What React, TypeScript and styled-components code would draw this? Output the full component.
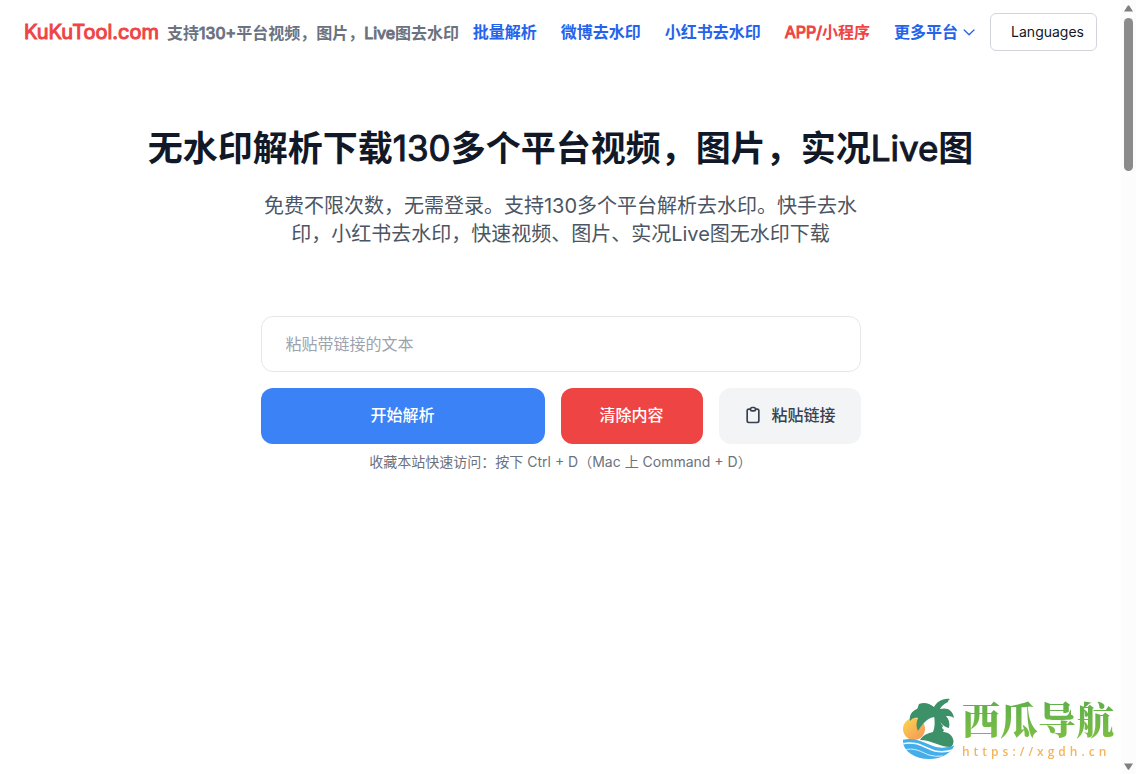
import React, { useState } from "react";
import styled, { createGlobalStyle } from "styled-components";

const GlobalStyle = createGlobalStyle`
  *, *::before, *::after { box-sizing: border-box; }
  html, body, #root { height: 100%; }
  body {
    margin: 0;
    background: #fff;
    color: #111827;
    font-family: Inter, "Noto Sans CJK SC", sans-serif;
    font-size: 16px;
    line-height: 24px;
  }
  button, input { font: inherit; }
`;

const Shell = styled.div`
  display: flex;
  height: 100%;
  min-height: 100vh;
`;

const Page = styled.div`
  flex: 1;
  min-width: 0;
  display: flex;
  flex-direction: column;
`;

const Header = styled.header`
  display: flex;
  align-items: center;
  justify-content: space-between;
  height: 64px;
  padding: 0 24px;
  white-space: nowrap;
`;

const Brand = styled.a`
  display: flex;
  align-items: center;
  gap: 8px;
  text-decoration: none;
`;

/* Latin runs are the regular weight thickened by an outline. */
const Latin = styled.span`
  font-weight: 400;
  -webkit-text-stroke: 1px currentColor;
`;

const BrandName = styled(Latin)`
  color: #ef4444;
  font-size: 20px;
  line-height: 28px;
`;

const BrandNote = styled.span`
  color: #6b7280;
  font-weight: 600;
  padding-top: 2px;
`;

const Nav = styled.nav`
  display: flex;
  align-items: center;
  gap: 24px;
`;

const NavLink = styled.a<{ $accent?: boolean }>`
  color: ${(p) => (p.$accent ? "#ef4444" : "#2563eb")};
  font-weight: 600;
  text-decoration: none;
`;

const MoreButton = styled.button`
  display: flex;
  align-items: center;
  gap: 4px;
  padding: 0;
  border: 0;
  background: none;
  color: #2563eb;
  font-weight: 600;
  cursor: pointer;
`;

const LanguageButton = styled.button`
  height: 38px;
  padding: 0 12px 0 20px;
  border: 1px solid #d1d5db;
  border-radius: 6px;
  background: #fff;
  color: #111827;
  font-size: 14px;
  line-height: 20px;
  cursor: pointer;
`;

const HeaderEnd = styled.div`
  display: flex;
  align-items: center;
  gap: 14px;
`;

const Main = styled.main`
  flex: 1;
  display: flex;
  flex-direction: column;
  align-items: center;
  padding: 64px 24px 0;
`;

const Title = styled.h1`
  margin: 0;
  font-size: 35px;
  line-height: 40px;
  font-weight: 600;
  text-align: center;
`;

const Lead = styled.p`
  max-width: 600px;
  margin: 24px 0 0;
  color: #4b5563;
  font-size: 20px;
  line-height: 28px;
  text-align: center;
`;

const Form = styled.form`
  display: grid;
  grid-template-columns: 2fr 1fr 1fr;
  gap: 16px;
  width: 100%;
  max-width: 600px;
  margin-top: 68px;
`;

const LinkInput = styled.input`
  grid-column: 1 / -1;
  min-width: 0;
  height: 56px;
  padding: 0 24px;
  border: 1px solid #e5e7eb;
  border-radius: 12px;
  background: #fff;
  outline: none;
  &::placeholder { color: #9ca3af; opacity: 1; }
`;

const tones = {
  primary: { bg: "#3b82f6", fg: "#fff" },
  danger: { bg: "#ef4444", fg: "#fff" },
  plain: { bg: "#f3f4f6", fg: "#374151" },
};

const ActionButton = styled.button<{ $tone: keyof typeof tones }>`
  display: flex;
  align-items: center;
  justify-content: center;
  gap: 8px;
  height: 56px;
  padding: 0 0 2px;
  border: 0;
  border-radius: 12px;
  background: ${(p) => tones[p.$tone].bg};
  color: ${(p) => tones[p.$tone].fg};
  font-weight: 500;
  cursor: pointer;
`;

const Hint = styled.p`
  margin: 8px 0 0;
  color: #6b7280;
  font-size: 14px;
  line-height: 20px;
`;

const ScrollTrack = styled.div`
  flex: none;
  width: 15px;
  display: flex;
  flex-direction: column;
  align-items: center;
  padding: 5px 0 4px;
  background: #fcfcfc;
`;

const ScrollThumb = styled.div`
  width: 9px;
  height: 20%;
  margin: 6px 0 auto;
  border-radius: 5px;
  background: #8b8b8b;
`;

const Watermark = styled.a`
  position: fixed;
  right: 22px;
  bottom: 14px;
  display: flex;
  align-items: center;
  gap: 6px;
  text-decoration: none;
`;

const WatermarkText = styled.span`
  display: flex;
  flex-direction: column;
  gap: 4px;
`;

const WatermarkName = styled.span`
  color: transparent;
  background: linear-gradient(#5cad4b, #7cbf45);
  background-clip: text;
  font-family: "Noto Serif CJK SC", "Noto Sans CJK SC", serif;
  font-size: 38px;
  line-height: 44px;
  font-weight: 900;
`;

const WatermarkUrl = styled.span`
  color: #f6b45a;
  font-family: "Open Sans", sans-serif;
  font-size: 12px;
  line-height: 16px;
  font-weight: 600;
  letter-spacing: 4px;
`;

const Chevron = () => (
  <svg width="14" height="14" viewBox="0 0 14 14" fill="none" stroke="currentColor" strokeWidth="1.3" strokeLinecap="round" strokeLinejoin="round" aria-hidden="true">
    <path d="M2.2 5l4.9 4.8L12 5" />
  </svg>
);

const Clipboard = () => (
  <svg width="20" height="20" viewBox="0 0 24 24" fill="none" stroke="currentColor" strokeWidth="2" strokeLinecap="round" strokeLinejoin="round" aria-hidden="true">
    <path d="M9 5H7a2 2 0 0 0-2 2v12a2 2 0 0 0 2 2h10a2 2 0 0 0 2-2V7a2 2 0 0 0-2-2h-2M9 5a2 2 0 0 0 2 2h2a2 2 0 0 0 2-2M9 5a2 2 0 0 1 2-2h2a2 2 0 0 1 2 2" />
  </svg>
);

const Arrow = ({ down }: { down?: boolean }) => (
  <svg width="9" height="7" viewBox="0 0 9 7" fill="#7f7f7f" aria-hidden="true">
    <path d={down ? "M0 0.5h9L5.3 6.3q-.8 1-1.6 0z" : "M0 6.5h9L5.3.7q-.8-1-1.6 0z"} />
  </svg>
);

const IslandLogo = () => (
  <svg width="54" height="62" viewBox="0 0 54 62" aria-hidden="true">
    <defs>
      <linearGradient id="sun" x1="0" y1="0" x2="1" y2="1">
        <stop offset="0" stopColor="#fbd84b" />
        <stop offset="1" stopColor="#f4925a" />
      </linearGradient>
      <clipPath id="sea">
        <path d="M1 38h52v6a26 18 0 0 1-52 0z" />
      </clipPath>
    </defs>
    <circle cx="12" cy="32" r="11" fill="url(#sun)" />
    <path d="M18 43C21 38 26 36 31 35c2-5 2-10 1-17l6-1c0 6 0 9 3 12l-1 2 2 2-1 2c6 0 10 4 10.500 9 0 3-1 5-3 6C38 50 29 43 18 43z" fill="#3c9168" />
    <path d="M33 20C28 20 22 24 16 34c-2-4-2-8 0-13-3-1-6 0-8 3-1-6 2-10 7-12 1-1 1-3 2-5 5-2 10-1 15 3C35 5 40 1 48 2q-2 1-2 3-6 3-8 7c7-2 13 1 14 9-3-2-5-2-8-2 3 3 4 7 3 12-5-1-9-5-11-10z" fill="#3c9168" />
    <g clipPath="url(#sea)">
      <path d="M0 43C14 39 24 47 34 50q9 2 20-2v14H0z" fill="#43aeea" />
      <path d="M0 47c14-4 23 4 33 7q10 2 21-2" fill="none" stroke="#fff" strokeWidth="1.500" />
      <path d="M2 53c11-3 17 2 25 5q6 2 14 1" fill="none" stroke="#fff" strokeWidth="0.800" />
    </g>
  </svg>
);

export default function App() {
  const [text, setText] = useState("");
  return (
    <>
      <GlobalStyle />
      <Shell>
        <Page>
          <Header>
            <Brand href="#">
              <BrandName>KuKuTool.com</BrandName>
              <BrandNote>支持<Latin>130+</Latin>平台视频，图片，<Latin>Live</Latin>图去水印</BrandNote>
            </Brand>
            <HeaderEnd>
              <Nav>
                <NavLink href="#">批量解析</NavLink>
                <NavLink href="#">微博去水印</NavLink>
                <NavLink href="#">小红书去水印</NavLink>
                <NavLink href="#" $accent><Latin>APP/</Latin>小程序</NavLink>
                <MoreButton type="button">更多平台<Chevron /></MoreButton>
              </Nav>
              <LanguageButton type="button">Languages</LanguageButton>
            </HeaderEnd>
          </Header>
          <Main>
            <Title>无水印解析下载<Latin>130</Latin>多个平台视频，图片，实况<Latin>Live</Latin>图</Title>
            <Lead>免费不限次数，无需登录。支持130多个平台解析去水印。快手去水印，小红书去水印，快速视频、图片、实况Live图无水印下载</Lead>
            <Form onSubmit={(e) => e.preventDefault()}>
              <LinkInput
                aria-label="粘贴带链接的文本"
                placeholder="粘贴带链接的文本"
                value={text}
                onChange={(e) => setText(e.target.value)}
              />
              <ActionButton type="submit" $tone="primary">开始解析</ActionButton>
              <ActionButton type="button" $tone="danger" onClick={() => setText("")}>清除内容</ActionButton>
              <ActionButton type="button" $tone="plain"><Clipboard />粘贴链接</ActionButton>
            </Form>
            <Hint>收藏本站快速访问：按下 Ctrl + D（Mac 上 Command + D）</Hint>
          </Main>
        </Page>
        <ScrollTrack aria-hidden="true">
          <Arrow />
          <ScrollThumb />
          <Arrow down />
        </ScrollTrack>
      </Shell>
      <Watermark href="#">
        <IslandLogo />
        <WatermarkText>
          <WatermarkName>西瓜导航</WatermarkName>
          <WatermarkUrl>https://xgdh.cn</WatermarkUrl>
        </WatermarkText>
      </Watermark>
    </>
  );
}
